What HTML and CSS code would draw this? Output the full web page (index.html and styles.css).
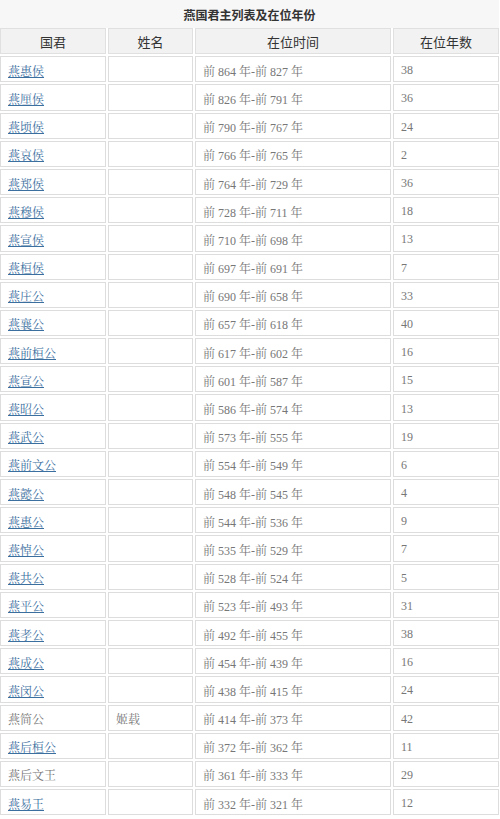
FILE: index.html
```html
<!DOCTYPE html>
<html lang="zh">
<head>
<meta charset="utf-8">
<title>燕国君主列表及在位年份</title>
<link rel="stylesheet" href="styles.css">
</head>
<body>
<div class="page">
  <div class="caption">燕国君主列表及在位年份</div>
  <div class="grid">
    <div class="cell head">国君</div>
    <div class="cell head">姓名</div>
    <div class="cell head">在位时间</div>
    <div class="cell head">在位年数</div>

    <div class="cell"><a href="#">燕惠侯</a></div><div class="cell"></div><div class="cell">前 864 年-前 827 年</div><div class="cell">38</div>
    <div class="cell"><a href="#">燕厘侯</a></div><div class="cell"></div><div class="cell">前 826 年-前 791 年</div><div class="cell">36</div>
    <div class="cell"><a href="#">燕顷侯</a></div><div class="cell"></div><div class="cell">前 790 年-前 767 年</div><div class="cell">24</div>
    <div class="cell"><a href="#">燕哀侯</a></div><div class="cell"></div><div class="cell">前 766 年-前 765 年</div><div class="cell">2</div>
    <div class="cell"><a href="#">燕郑侯</a></div><div class="cell"></div><div class="cell">前 764 年-前 729 年</div><div class="cell">36</div>
    <div class="cell"><a href="#">燕穆侯</a></div><div class="cell"></div><div class="cell">前 728 年-前 711 年</div><div class="cell">18</div>
    <div class="cell"><a href="#">燕宣侯</a></div><div class="cell"></div><div class="cell">前 710 年-前 698 年</div><div class="cell">13</div>
    <div class="cell"><a href="#">燕桓侯</a></div><div class="cell"></div><div class="cell">前 697 年-前 691 年</div><div class="cell">7</div>
    <div class="cell"><a href="#">燕庄公</a></div><div class="cell"></div><div class="cell">前 690 年-前 658 年</div><div class="cell">33</div>
    <div class="cell"><a href="#">燕襄公</a></div><div class="cell"></div><div class="cell">前 657 年-前 618 年</div><div class="cell">40</div>
    <div class="cell"><a href="#">燕前桓公</a></div><div class="cell"></div><div class="cell">前 617 年-前 602 年</div><div class="cell">16</div>
    <div class="cell"><a href="#">燕宣公</a></div><div class="cell"></div><div class="cell">前 601 年-前 587 年</div><div class="cell">15</div>
    <div class="cell"><a href="#">燕昭公</a></div><div class="cell"></div><div class="cell">前 586 年-前 574 年</div><div class="cell">13</div>
    <div class="cell"><a href="#">燕武公</a></div><div class="cell"></div><div class="cell">前 573 年-前 555 年</div><div class="cell">19</div>
    <div class="cell"><a href="#">燕前文公</a></div><div class="cell"></div><div class="cell">前 554 年-前 549 年</div><div class="cell">6</div>
    <div class="cell"><a href="#">燕懿公</a></div><div class="cell"></div><div class="cell">前 548 年-前 545 年</div><div class="cell">4</div>
    <div class="cell"><a href="#">燕惠公</a></div><div class="cell"></div><div class="cell">前 544 年-前 536 年</div><div class="cell">9</div>
    <div class="cell"><a href="#">燕悼公</a></div><div class="cell"></div><div class="cell">前 535 年-前 529 年</div><div class="cell">7</div>
    <div class="cell"><a href="#">燕共公</a></div><div class="cell"></div><div class="cell">前 528 年-前 524 年</div><div class="cell">5</div>
    <div class="cell"><a href="#">燕平公</a></div><div class="cell"></div><div class="cell">前 523 年-前 493 年</div><div class="cell">31</div>
    <div class="cell"><a href="#">燕孝公</a></div><div class="cell"></div><div class="cell">前 492 年-前 455 年</div><div class="cell">38</div>
    <div class="cell"><a href="#">燕成公</a></div><div class="cell"></div><div class="cell">前 454 年-前 439 年</div><div class="cell">16</div>
    <div class="cell"><a href="#">燕闵公</a></div><div class="cell"></div><div class="cell">前 438 年-前 415 年</div><div class="cell">24</div>
    <div class="cell">燕简公</div><div class="cell">姬载</div><div class="cell">前 414 年-前 373 年</div><div class="cell">42</div>
    <div class="cell"><a href="#">燕后桓公</a></div><div class="cell"></div><div class="cell">前 372 年-前 362 年</div><div class="cell">11</div>
    <div class="cell">燕后文王</div><div class="cell"></div><div class="cell">前 361 年-前 333 年</div><div class="cell">29</div>
    <div class="cell"><a href="#">燕易王</a></div><div class="cell"></div><div class="cell">前 332 年-前 321 年</div><div class="cell">12</div>
  </div>
</div>
</body>
</html>
```

FILE: styles.css
```css
html, body {
  margin: 0;
  padding: 0;
  background: #ffffff;
}

.page {
  width: 499px;
  font-family: "Liberation Serif", "Noto Serif CJK SC", "Noto Sans CJK SC", serif;
  font-size: 12px;
  color: #777777;
}

.caption {
  height: 28px;
  display: flex;
  align-items: center;
  justify-content: center;
  background: #f7f7f7;
  font-family: "Noto Sans CJK SC", sans-serif;
  font-weight: bold;
  font-size: 12px;
  color: #333333;
}

.grid {
  display: grid;
  grid-template-columns: 106px 85px 196px 106px;
  grid-auto-rows: 26.2px;
  gap: 2px;
}

.cell {
  box-sizing: border-box;
  border: 1px solid #dddddd;
  background: #ffffff;
  padding: 3px 7px 0 7px;
  display: flex;
  align-items: center;
  white-space: nowrap;
}

.cell.head {
  height: 26px;
  padding: 0;
  justify-content: center;
  background: #f2f2f2;
  font-family: "Noto Sans CJK SC", sans-serif;
  font-size: 13px;
  color: #333333;
  border-color: #e0e0e0;
}

.cell a {
  color: #3b6fa0;
  text-decoration: underline;
}
```
